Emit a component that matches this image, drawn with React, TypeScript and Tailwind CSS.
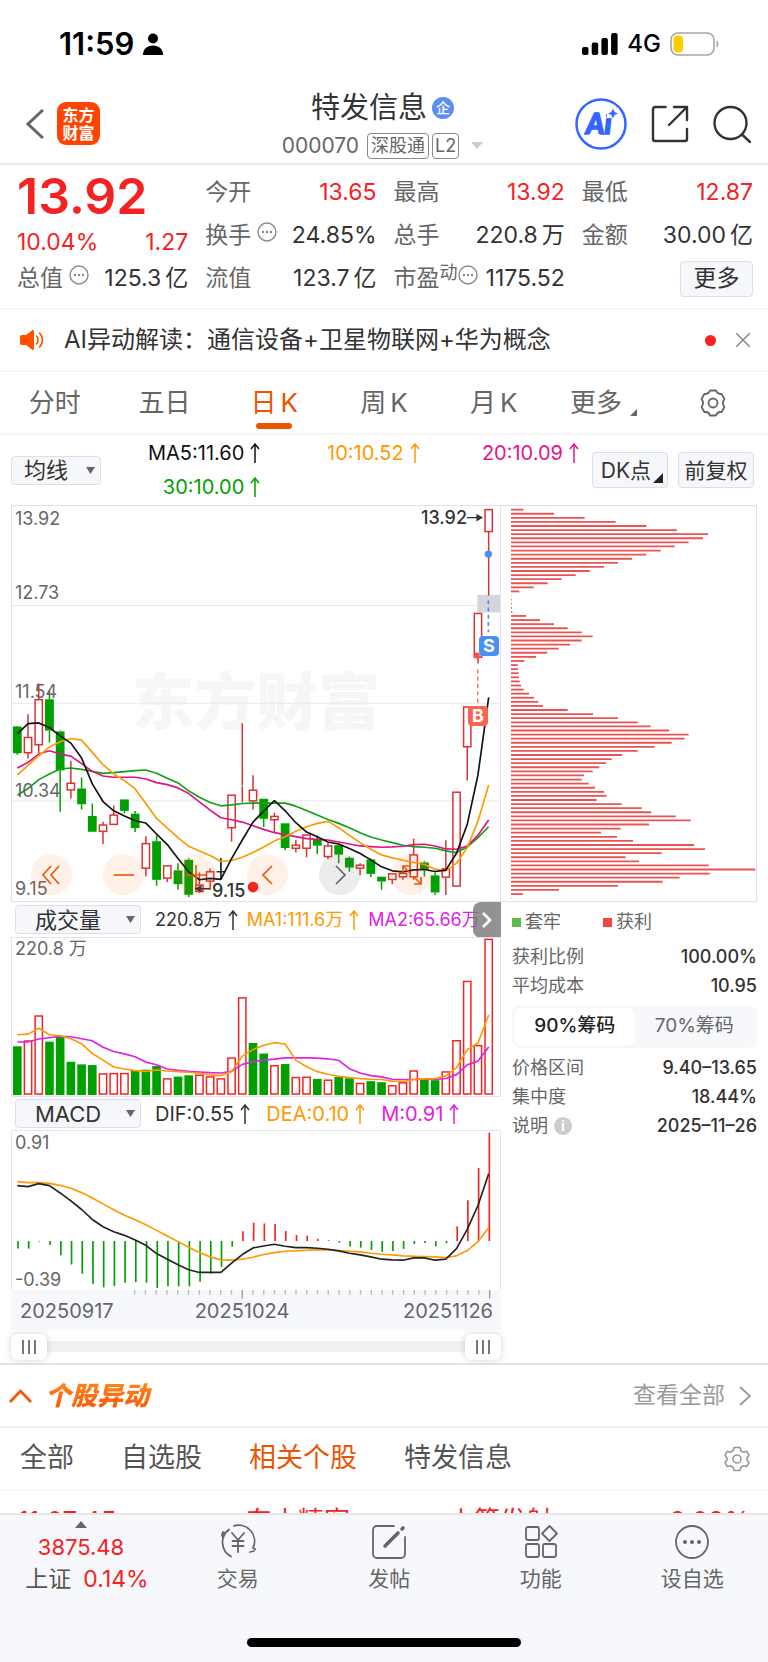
import React, { useState } from 'react';
import clsx from 'clsx';

// Plot units: 3 per CSS pixel. One trading day is STEP units wide.
const STEP = 32.27;
const FIRST = 49;
const dayX = (i: number) => FIRST + i * STEP;

type Kind = 'up' | 'down' | 'flat';
// kind, high, body top, body bottom, low
type Candle = [Kind, number, number, number, number];

const candles: Candle[] = [
  ['down', 678, 680, 760, 765], ['up', 643, 712, 760, 776], ['up', 550, 598, 736, 760],
  ['down', 572, 598, 692, 728], ['down', 692, 695, 812, 937], ['up', 783, 850, 872, 897],
  ['down', 834, 867, 914, 930], ['down', 912, 950, 997, 997], ['up', 967, 976, 997, 1034],
  ['up', 918, 946, 976, 976], ['down', 900, 900, 934, 942], ['down', 935, 943, 986, 998],
  ['up', 1011, 1032, 1108, 1132], ['down', 1008, 1026, 1142, 1160], ['up', 1099, 1099, 1138, 1149],
  ['down', 1092, 1114, 1155, 1172], ['down', 1077, 1082, 1187, 1194], ['up', 1120, 1157, 1178, 1182],
  ['up', 1108, 1117, 1147, 1172], ['flat', 1077, 1118, 1118, 1140], ['up', 886, 886, 986, 1027],
  ['up', 670, 858, 860, 908], ['up', 827, 871, 905, 930], ['down', 898, 898, 958, 983],
  ['up', 940, 950, 962, 1000], ['down', 972, 972, 1046, 1053], ['up', 1022, 1037, 1048, 1060],
  ['up', 1006, 1006, 1048, 1074], ['down', 1008, 1020, 1039, 1064], ['up', 1030, 1039, 1073, 1080],
  ['down', 1034, 1038, 1066, 1092], ['down', 1072, 1076, 1105, 1118], ['up', 1092, 1097, 1108, 1128],
  ['down', 1078, 1081, 1124, 1134], ['down', 1133, 1133, 1147, 1172], ['up', 1123, 1123, 1142, 1155],
  ['up', 1118, 1122, 1134, 1142], ['up', 1018, 1066, 1134, 1142], ['down', 1086, 1090, 1112, 1132],
  ['down', 1120, 1129, 1180, 1188], ['up', 1023, 1108, 1135, 1188], ['up', 877, 877, 1162, 1162],
  ['up', 620, 620, 742, 843], ['up', 338, 338, 472, 490], ['up', 25, 25, 93, 285],
];

const ma5 = [702, 671, 669, 683, 708, 730, 775, 853, 906, 934, 950, 964, 971, 1004, 1036, 1078, 1118, 1142, 1138, 1141, 1078, 1022, 968, 935, 903, 934, 970, 998, 1012, 1028, 1034, 1048, 1063, 1082, 1103, 1115, 1118, 1112, 1111, 1117, 1113, 1062, 975, 826, 592];
const ma10 = [826, 797, 768, 742, 726, 716, 721, 758, 795, 823, 843, 868, 912, 957, 986, 1015, 1041, 1055, 1069, 1087, 1084, 1074, 1060, 1043, 1025, 1012, 996, 982, 972, 966, 985, 1008, 1030, 1050, 1067, 1076, 1083, 1090, 1096, 1110, 1115, 1092, 1045, 965, 856];
const ma20 = [805, 788, 763, 753, 763, 769, 792, 815, 829, 833, 833, 833, 838, 849, 855, 865, 882, 907, 932, 955, 961, 968, 979, 990, 1000, 1006, 1012, 1018, 1020, 1022, 1028, 1034, 1040, 1042, 1044, 1043, 1041, 1036, 1035, 1040, 1049, 1050, 1040, 1008, 962];
const ma30 = [887, 867, 840, 823, 808, 805, 809, 815, 821, 819, 816, 813, 811, 821, 836, 850, 874, 893, 909, 919, 916, 912, 911, 911, 911, 911, 920, 933, 947, 960, 972, 985, 1000, 1013, 1022, 1030, 1038, 1042, 1044, 1047, 1055, 1060, 1043, 1015, 982];

const volumes = [440, 423, 347, 426, 411, 487, 495, 497, 523, 522, 522, 514, 511, 500, 538, 532, 528, 527, 532, 538, 475, 292, 430, 462, 498, 494, 534, 533, 539, 542, 533, 537, 552, 546, 549, 559, 550, 514, 540, 543, 517, 422, 242, 437, 114];
const fallingDays = [0, 3, 4, 5, 6, 7, 11, 12, 13, 15, 16, 22, 23, 25, 28, 30, 31, 33, 34, 38, 39];
const volMa1 = [405, 403, 385, 405, 408, 417, 432, 462, 482, 503, 509, 514, 516, 512, 515, 517, 519, 522, 527, 529, 517, 470, 450, 437, 429, 433, 482, 502, 517, 525, 531, 535, 538, 540, 541, 546, 547, 541, 539, 538, 530, 505, 450, 430, 345];
const volMa2 = [427, 427, 418, 414, 410, 411, 417, 423, 443, 456, 463, 472, 488, 496, 509, 513, 516, 518, 520, 521, 516, 495, 487, 482, 479, 475, 475, 475, 476, 478, 483, 508, 521, 529, 533, 540, 541, 541, 540, 541, 538, 526, 496, 485, 442];

const macdBars = [418, 418, 397, 407, 438, 466, 494, 525, 535, 531, 521, 519, 521, 537, 532, 532, 532, 518, 494, 473, 412, 366, 340, 342, 344, 365, 377, 379, 388, 393, 400, 411, 415, 422, 428, 425, 419, 404, 401, 411, 402, 351, 272, 175, 68];
const dif = [228, 231, 222, 228, 250, 274, 300, 330, 352, 367, 378, 392, 408, 433, 450, 467, 482, 490, 490, 490, 462, 436, 416, 410, 405, 411, 415, 415, 417, 420, 425, 432, 437, 443, 450, 452, 453, 446, 446, 453, 450, 418, 360, 288, 192];
const dea = [216, 219, 219, 221, 227, 236, 249, 265, 283, 301, 317, 331, 346, 363, 380, 397, 414, 430, 443, 452, 453, 450, 444, 436, 430, 426, 425, 423, 422, 422, 424, 426, 428, 432, 435, 437, 440, 441, 442, 443, 445, 440, 424, 397, 355];

const chips = [73, 165, 257, 350, 442, 534, 627, 612, 569, 527, 485, 442, 399, 357, 315, 272, 230, 188, 146, 104, 61, 37, 38, 38, 39, 40, 81, 123, 165, 206, 248, 281, 248, 213, 179, 144, 111, 76, 56, 57, 59, 60, 62, 66, 74, 90, 105, 118, 132, 206, 282, 357, 416, 455, 510, 569, 557, 518, 467, 416, 369, 338, 321, 301, 281, 255, 248, 269, 288, 315, 323, 293, 368, 428, 457, 530, 575, 450, 365, 306, 354, 402, 585, 618, 488, 380, 420, 629, 769, 632, 542, 491, 357, 180, 72, 37];

const toPoints = (values: number[]) => values.map((y, i) => `${dayX(i)},${y}`).join(' ');

const Line = ({ values, color }: { values: number[]; color: string }) => (
  <polyline points={toPoints(values)} fill="none" stroke={color} strokeWidth="5" strokeLinejoin="round" />
);

const UpArrow = () => (
  <svg viewBox="0 0 10 20" className="ml-[6px] inline-block h-5 w-[10px]" fill="none" stroke="currentColor" strokeWidth="1.5">
    <path d="M5 20V1M1 6l4-5 4 5" />
  </svg>
);

const Dots = ({ className }: { className?: string }) => (
  <svg viewBox="0 0 20 20" className={clsx('size-5 text-[#8a8a8a]', className)}>
    <circle cx="10" cy="10" r="9" fill="none" stroke="currentColor" strokeWidth="1.4" />
    <circle cx="6" cy="10" r="1.2" fill="currentColor" />
    <circle cx="10" cy="10" r="1.2" fill="currentColor" />
    <circle cx="14" cy="10" r="1.2" fill="currentColor" />
  </svg>
);

const StatusBar = () => (
  <div className="flex h-[88px] items-center justify-between pr-[49px] pl-[59px]">
    <div className="flex items-center gap-[9px] text-[31px] leading-9 font-semibold text-black">
      11:59
      <svg viewBox="0 0 20 22" className="h-[22px] w-5" fill="currentColor">
        <circle cx="10" cy="5.500" r="5" />
        <path d="M0 22c0-6 4-9.500 10-9.500S20 16 20 22z" />
      </svg>
    </div>
    <div className="flex items-center gap-[9px] text-2xl font-medium text-black">
      <svg viewBox="0 0 36 22" className="h-[22px] w-9" fill="currentColor">
        <rect x="0" y="14" width="6.500" height="8" rx="2" />
        <rect x="9.700" y="9.500" width="6.500" height="12.500" rx="2" />
        <rect x="19.400" y="5" width="6.500" height="17" rx="2" />
        <rect x="29.100" y="0" width="6.500" height="22" rx="2" />
      </svg>
      4G
      <svg viewBox="0 0 49 24" className="h-6 w-[49px]">
        <rect x="1" y="1" width="43" height="22" rx="7" fill="none" stroke="#a5a5a5" strokeWidth="1.600" />
        <rect x="3.500" y="3.500" width="9.500" height="17" rx="4" fill="#ffcc00" />
        <path d="M46.500 8.500c2.600 1 2.600 6 0 7z" fill="#a5a5a5" />
      </svg>
    </div>
  </div>
);

const Header = () => (
  <header className="flex h-[77px] items-center justify-between border-b-2 border-[#e9e9e9] pr-[17px] pl-[26px]">
    <div className="mb-1 flex w-[164px] items-center gap-[13px]">
      <button aria-label="返回">
        <svg viewBox="0 0 18 30" className="h-[30px] w-[18px]" fill="none" stroke="#666" strokeWidth="3">
          <path d="M17 1L2 15l15 14" />
        </svg>
      </button>
      <div className="flex size-[43px] flex-col items-center justify-center rounded-[9px] bg-[#ff4400] text-base leading-[18px] font-bold text-white">
        <span>东方</span>
        <span>财富</span>
      </div>
    </div>
    <div className="flex flex-col items-center">
      <div className="flex items-center gap-[5px] text-[29px] leading-10 text-[#333]">
        特发信息
        <span className="flex size-[22px] items-center justify-center rounded-full bg-[#5c8df0] text-sm leading-none font-medium text-white">企</span>
      </div>
      <div className="flex items-center text-[21px] leading-9 text-[#666]">
        000070
        <span className="ml-2 rounded border border-[#888] px-[3px] text-lg leading-6">深股通</span>
        <span className="ml-[3px] rounded border border-[#888] px-[2px] text-lg leading-6">L2</span>
        <svg viewBox="0 0 12 7" className="ml-3 h-[7px] w-3" fill="#ccc"><path d="M0 0h12L6 7z" /></svg>
      </div>
    </div>
    <div className="mb-1 flex items-center gap-6">
      <button aria-label="AI" className="size-[52px]">
        <svg viewBox="0 0 52 52" className="size-full">
          <circle cx="26" cy="26" r="24.500" fill="none" stroke="#3366ff" strokeWidth="2.500" />
          <text x="11" y="36" fontSize="28" fontWeight="900" fontStyle="italic" fill="#3366ff" stroke="#3366ff" strokeWidth="1.600" className="font-['Lato',sans-serif]">Ai</text>
          <rect x="32" y="10" width="12" height="10" fill="#fff" />
          <path d="M38 10.500l1.600 3.400 3.400 1.600-3.400 1.600L38 20.500l-1.600-3.400-3.400-1.600 3.400-1.600z" fill="#3366ff" />
        </svg>
      </button>
      <button aria-label="分享">
        <svg viewBox="0 0 38 38" className="size-[38px]" fill="none" stroke="#333" strokeWidth="2.400" strokeLinecap="round" strokeLinejoin="round">
          <path d="M14.500 2H4a2 2 0 0 0-2 2v30a2 2 0 0 0 2 2h30a2 2 0 0 0 2-2V24" />
          <path d="M23 2h13v13M36 2L18 20" />
        </svg>
      </button>
      <button aria-label="搜索">
        <svg viewBox="0 0 38 38" className="size-[38px]" fill="none" stroke="#333" strokeWidth="2.400" strokeLinecap="round">
          <circle cx="17.500" cy="18" r="16" />
          <path d="M29 29.500l8 7.500" />
        </svg>
      </button>
    </div>
  </header>
);

interface StatProps {
  label: string;
  value: string;
  unit?: string;
  red?: boolean;
  dots?: boolean;
  sup?: string;
}

const Stat: React.FC<StatProps> = ({ label, value, unit, red, dots, sup }) => (
  <div className="flex h-[43px] items-center justify-between">
    <span className="flex items-center text-[23px] whitespace-nowrap text-[#666]">
      {label}
      {sup && <span className="mb-3 text-lg leading-5">{sup}</span>}
      {dots && <Dots className={clsx('mb-2', !sup && 'ml-[6px]')} />}
    </span>
    <span className={clsx('text-[23px]', red ? 'text-[#f42222]' : 'text-[#333]')}>
      {value}
      {unit && <span className="ml-1">{unit}</span>}
    </span>
  </div>
);

const Quote = () => (
  <section className="grid h-[145px] grid-cols-4 gap-x-[17px] border-b-2 border-[#f5f5f5] pt-[6px] pr-[15px] pl-[17px]">
    <div>
      <div className="flex h-[50px] items-center text-[50px] leading-none font-semibold text-[#f42222]">13.92</div>
      <div className="flex h-9 items-end justify-between text-[23px] leading-[30px] text-[#f42222]">
        <span>10.04%</span>
        <span>1.27</span>
      </div>
      <Stat label="总值" value="125.3" unit="亿" dots />
    </div>
    <div>
      <Stat label="今开" value="13.65" red />
      <Stat label="换手" value="24.85%" dots />
      <Stat label="流值" value="123.7" unit="亿" />
    </div>
    <div>
      <Stat label="最高" value="13.92" red />
      <Stat label="总手" value="220.8" unit="万" />
      <Stat label="市盈" sup="动" dots value="1175.52" />
    </div>
    <div>
      <Stat label="最低" value="12.87" red />
      <Stat label="金额" value="30.00" unit="亿" />
      <div className="flex h-[43px] items-center justify-end">
        <button className="h-9 w-[73px] rounded border border-[#dcdfe8] bg-[#f6f7fa] text-[23px] leading-none text-[#333]">更多</button>
      </div>
    </div>
  </section>
);

const Notice = () => (
  <section className="flex h-[62px] items-center border-b-2 border-[#f5f5f5] pr-[18px] pl-5">
    <svg viewBox="0 0 24 20" className="h-5 w-6" fill="#ff5000">
      <path d="M0 6.500A2 2 0 0 1 2 5h4l6-4.600c1-.7 2-.2 2 1v17.200c0 1.200-1 1.700-2 1L6 15H2a2 2 0 0 1-2-1.500z" />
      <path d="M16.500 6c2 2 2 6 0 8M19.500 3c4 4 4 10 0 14" fill="none" stroke="#ff5000" strokeWidth="1.600" strokeLinecap="round" />
    </svg>
    <p className="ml-5 flex-1 text-2xl whitespace-nowrap text-[#333]">AI异动解读：通信设备+卫星物联网+华为概念</p>
    <span className="size-[11px] rounded-full bg-[#f42222]" />
    <button aria-label="关闭" className="ml-5">
      <svg viewBox="0 0 14 14" className="size-[14px]" stroke="#888" strokeWidth="1.500"><path d="M0 0l14 14M14 0L0 14" /></svg>
    </button>
  </section>
);

const periods = ['分时', '五日', '日K', '周K', '月K', '更多'];

const PeriodTabs = () => {
  const [active, setActive] = useState('日K');
  return (
    <nav className="grid h-[63px] grid-cols-7 border-b-2 border-[#f5f5f5]">
      {periods.map((p) => (
        <button
          key={p}
          onClick={() => setActive(p)}
          className={clsx('relative flex items-center justify-center text-[26px]', active === p ? 'text-[#ea5504]' : 'text-[#666]')}
        >
          {p.replace('K', '')}
          {p.endsWith('K') && <span className="ml-1">K</span>}
          {p === '更多' && (
            <svg viewBox="0 0 7 7" className="mt-5 ml-2 size-[7px]" fill="currentColor"><path d="M7 0v7H0z" /></svg>
          )}
          {active === p && <span className="absolute bottom-1 h-[6px] w-9 rounded-full bg-[#ea5504]" />}
        </button>
      ))}
      <button aria-label="图表设置" className="flex items-center justify-center">
        <svg viewBox="0 0 30 30" className="size-[30px]" fill="none" stroke="#666" strokeWidth="1.800" strokeLinejoin="round">
          <path d="M12 2.500h6c1 3 2.500 4 5.500 3.300l3 5.200c-2 2.500-2 5.500 0 8l-3 5.200c-3-.7-4.500.3-5.500 3.300h-6c-1-3-2.500-4-5.500-3.300l-3-5.200c2-2.500 2-5.500 0-8l3-5.200c3 .7 4.500-.3 5.500-3.300z" />
          <circle cx="15" cy="15" r="4.500" />
        </svg>
      </button>
    </nav>
  );
};

const Picker = ({ label, value, className }: { label: string; value: string; className: string }) => (
  <div className={clsx('relative h-[29px] rounded border border-[#dcdfe8] bg-[#f6f7fa]', className)}>
    <select aria-label={label} defaultValue={value} className="h-full w-full appearance-none pr-5 text-center text-[22px] leading-none text-[#333] outline-none">
      <option>{value}</option>
    </select>
    <svg viewBox="0 0 9 7" className="pointer-events-none absolute top-[10px] right-[5px] h-[7px] w-[9px]" fill="#666"><path d="M0 0h9L4.500 7z" /></svg>
  </div>
);

const IndicatorRow = () => (
  <section className="flex h-[70px] items-center pr-[14px] pl-[11px]">
    <Picker label="主图指标" value="均线" className="w-[90px]" />
    <div className="grid w-[478px] grid-cols-3 text-right text-xl leading-[34px] whitespace-nowrap">
      <span className="flex items-center justify-end text-[#111]">MA5:11.60<UpArrow /></span>
      <span className="flex items-center justify-end text-[#ff9900]">10:10.52<UpArrow /></span>
      <span className="flex items-center justify-end text-[#e6148c]">20:10.09<UpArrow /></span>
      <span className="flex items-center justify-end text-[#00a000]">30:10.00<UpArrow /></span>
    </div>
    <div className="ml-auto flex gap-[10px] text-[21px] text-[#333]">
      <button className="relative h-9 w-[76px] rounded border border-[#dcdfe8] bg-[#f6f7fa] pr-2 leading-none">
        DK点
        <svg viewBox="0 0 10 10" className="absolute right-1 bottom-1 size-[10px]" fill="#222"><path d="M10 0v10H0z" /></svg>
      </button>
      <button className="h-9 w-[76px] rounded border border-[#dcdfe8] bg-[#f6f7fa] leading-none">前复权</button>
    </div>
  </section>
);

const RoundButton = ({ label, gray, children }: { label: string; gray?: boolean; children: React.ReactNode }) => (
  <button aria-label={label} className={clsx('flex size-[41px] items-center justify-center rounded-full', gray ? 'bg-[#66666620] text-[#666]' : 'bg-[#ff660018] text-[#ee5a0a]')}>
    <svg viewBox="0 0 22 22" className="size-[22px]" fill="none" stroke="currentColor" strokeWidth="1.700">{children}</svg>
  </button>
);

const PriceChart = () => (
  <div className="relative h-[397px] border border-[#dfe2ea] text-lg leading-5 text-[#666]">
    <span className="absolute top-[152px] left-[120px] text-[62px] leading-[90px] font-black whitespace-nowrap text-[#f6f6f6]">东方财富</span>
    <svg viewBox="33 15 1470 1191" preserveAspectRatio="none" className="absolute inset-0 size-full">
      <path d="M33 315H1503M33 610H1503M33 904H1503" stroke="#e8e9f0" strokeWidth="3" />
      <rect x="1435" y="283" width="68" height="53" fill="#d3d6dc" />
      {candles.map(([kind, high, top, bottom, low], i) => {
        const x = dayX(i);
        const color = kind === 'down' ? '#00a000' : kind === 'up' ? '#d93333' : '#333';
        return (
          <g key={i} stroke={color} strokeWidth="4.500">
            <path d={`M${x} ${high}V${top}M${x} ${bottom}V${low}`} />
            {kind === 'flat' && <path d={`M${x} ${high}V${low}M${x - 13} ${top}H${x + 13}`} />}
            {kind === 'up' && <rect x={x - 11} y={top + 1} width="22" height={Math.max(bottom - top - 2, 0)} fill="none" />}
            {kind === 'down' && <rect x={x - 11} y={top + 2} width="22" height={bottom - top - 4} fill={color} />}
          </g>
        );
      })}
      <Line values={ma30} color="#12a012" />
      <Line values={ma20} color="#dc1487" />
      <Line values={ma10} color="#ff9900" />
      <Line values={ma5} color="#111" />
      <path d="M1468 299V396" stroke="#4a8ff5" strokeWidth="5" strokeDasharray="12 10" />
      <path d="M1436 508V610" stroke="#fa6450" strokeWidth="4" strokeDasharray="12 10" />
      <circle cx="1468" cy="160" r="11" fill="#4a8ff5" />
      <circle cx="1433" cy="466" r="9" fill="#fa5040" />
      <path d="M1403 50h42M1434 42l14 8-14 8z" stroke="#333" strokeWidth="4" fill="#333" />
      <path d="M630 1169H590M602 1161l-15 8 15 8z" stroke="#333" strokeWidth="4" fill="#333" />
      <circle cx="759" cy="1164" r="16" fill="#f42222" />
    </svg>
    <span className="absolute top-[3px] left-[3px]">13.92</span>
    <span className="absolute top-[77px] left-[3px]">12.73</span>
    <span className="absolute top-[176px] left-[3px]">11.54</span>
    <span className="absolute top-[275px] left-[3px]">10.34</span>
    <span className="absolute bottom-[2px] left-[3px]">9.15</span>
    <span className="absolute top-[2px] right-[33px] font-medium text-[#333]">13.92</span>
    <span className="absolute bottom-0 left-[200px] font-medium text-[#333]">9.15</span>
    <span className="absolute top-[130px] right-[1px] size-5 rounded bg-[#4a8ff5] text-center text-lg leading-5 font-bold text-white">S</span>
    <span className="absolute top-[200px] right-[12px] size-5 rounded bg-[#fa6450] text-center text-lg leading-5 font-bold text-white">B</span>
    <div className="absolute bottom-[6px] left-[19px] flex gap-[31px]">
      <RoundButton label="最早"><path d="M10 2L2 11l8 9M18 2l-8 9 8 9" /></RoundButton>
      <RoundButton label="缩小"><path d="M1 11h20" /></RoundButton>
      <RoundButton label="放大"><path d="M1 11h20M11 1v20" /></RoundButton>
      <RoundButton label="左移"><path d="M15 2l-9 9 9 9" /></RoundButton>
      <RoundButton label="右移" gray><path d="M7 2l9 9-9 9" /></RoundButton>
      <RoundButton label="全屏"><path d="M2 9V2h7M2 2l8 8M20 13v7h-7M20 20l-8-8" /></RoundButton>
    </div>
  </div>
);

const VolumeChart = () => (
  <>
    <div className="relative flex h-[35px] items-center pl-1 text-lg whitespace-nowrap">
      <Picker label="副图一" value="成交量" className="w-[126px]" />
      <span className="ml-[14px] flex items-center text-[#333]">220.8万<UpArrow /></span>
      <span className="ml-[9px] flex items-center text-[#ff9900]">MA1:111.6万<UpArrow /></span>
      <span className="ml-[9px] flex items-center text-[#dd22e6]">MA2:65.66万</span>
      <button aria-label="更多指标" className="absolute top-0 right-0 flex h-9 w-7 items-center justify-center rounded-l-lg bg-[#777777cc]">
        <svg viewBox="0 0 10 16" className="h-4 w-[10px]" fill="none" stroke="#fff" strokeWidth="2.600"><path d="M1 1l7 7-7 7" /></svg>
      </button>
    </div>
    <div className="relative h-[160px] border border-[#e3e5ea]">
      <svg viewBox="33 111 1470 480" preserveAspectRatio="none" className="size-full">
        {volumes.map((top, i) =>
          fallingDays.includes(i) ? (
            <rect key={i} x={dayX(i) - 13} y={top} width="26" height={588 - top} fill="#00a000" />
          ) : (
            <rect key={i} x={dayX(i) - 11} y={top + 1} width="22" height={584 - top} fill="none" stroke="#f42222" strokeWidth="4.500" />
          ),
        )}
        <Line values={volMa2} color="#dd22e6" />
        <Line values={volMa1} color="#ff9900" />
      </svg>
      <span className="absolute top-px left-[3px] text-lg leading-5 text-[#666]">220.8 万</span>
    </div>
  </>
);

const MacdChart = () => (
  <>
    <div className="flex h-[33px] items-center pl-1 text-xl whitespace-nowrap">
      <Picker label="副图二" value="MACD" className="w-[126px]" />
      <span className="ml-[14px] flex items-center text-[#333]">DIF:0.55<UpArrow /></span>
      <span className="ml-4 flex items-center text-[#ff9900]">DEA:0.10<UpArrow /></span>
      <span className="ml-4 flex items-center text-[#dd22e6]">M:0.91<UpArrow /></span>
    </div>
    <div className="relative h-[160px] border border-b-0 border-[#e3e5ea] text-lg leading-5 text-[#666]">
      <svg viewBox="33 63 1470 480" preserveAspectRatio="none" className="size-full">
        {macdBars.map((y, i) => (
          <path key={i} d={`M${dayX(i) + 2} 395V${y}`} stroke={y > 395 ? '#00a000' : '#f42222'} strokeWidth="5" />
        ))}
        <Line values={dea} color="#ff9900" />
        <Line values={dif} color="#222" />
      </svg>
      <span className="absolute top-[2px] left-[3px]">0.91</span>
      <span className="absolute bottom-0 left-[3px]">-0.39</span>
    </div>
    <div className="h-10 bg-[#f7f8fb]">
      <svg viewBox="33 0 1470 27" preserveAspectRatio="none" className="h-[9px] w-full" stroke="#bbb" strokeWidth="4">
        {Array.from({ length: 34 }, (_, k) => k + 11).map((i) => (
          <path key={i} d={`M${dayX(i)} 0V${i === 21 || i === 44 ? 26 : 14}`} stroke={i === 21 || i === 44 ? '#999' : '#bbb'} />
        ))}
      </svg>
      <div className="grid grid-cols-[172fr_100fr_201fr] pr-2 pl-[9px] text-xl leading-6 text-[#666]">
        <span>20250917</span>
        <span className="text-center">20251024</span>
        <span className="text-right">20251126</span>
      </div>
    </div>
    <RangeBar />
  </>
);

const thumb =
  'pointer-events-none absolute inset-0 h-full w-full appearance-none bg-transparent [&::-webkit-slider-thumb]:pointer-events-auto [&::-webkit-slider-thumb]:h-[26px] [&::-webkit-slider-thumb]:w-9 [&::-webkit-slider-thumb]:appearance-none [&::-webkit-slider-thumb]:rounded-md [&::-webkit-slider-thumb]:bg-white [&::-webkit-slider-thumb]:bg-[image:repeating-linear-gradient(90deg,#777_0px_2px,transparent_2px_6px)] [&::-webkit-slider-thumb]:bg-[length:14px_14px] [&::-webkit-slider-thumb]:bg-center [&::-webkit-slider-thumb]:bg-no-repeat [&::-webkit-slider-thumb]:shadow-[0_0_6px_rgba(0,0,0,0.18)]';

const RangeBar = () => (
  <div className="relative flex h-[33px] items-center">
    <div className="h-[11px] w-full bg-[#f0f0f4]" />
    <input type="range" aria-label="起始日期" defaultValue={0} className={thumb} />
    <input type="range" aria-label="结束日期" defaultValue={100} className={thumb} />
  </div>
);

const InfoLine = ({ label, value, info }: { label: string; value: string; info?: boolean }) => (
  <div className="flex h-[29px] items-center justify-between text-lg">
    <span className="flex items-center gap-[6px] text-[#666]">
      {label}
      {info && <span className="flex size-[18px] items-center justify-center rounded-full bg-[#ccc] text-sm font-bold text-white">i</span>}
    </span>
    <span className="font-medium text-[#333]">{value}</span>
  </div>
);

const ChipPanel = () => {
  const [range, setRange] = useState('90%筹码');
  return (
    <aside>
      <div className="h-[397px] border border-l-0 border-[#dfe2ea]">
        <svg viewBox="6 15 765 1191" preserveAspectRatio="none" className="size-full">
          {chips.map((end, i) => (
            <path key={i} d={`M36 ${26 + i * 12.33}H${end}`} stroke="#eb5252" strokeWidth="5.500" />
          ))}
        </svg>
      </div>
      <div className="pl-[11px]">
        <div className="flex h-10 items-center text-lg text-[#666]">
          <span className="mr-1 size-[9px] bg-[#5abe46]" />
          套牢
          <span className="mr-1 ml-[42px] size-[9px] bg-[#f04646]" />
          获利
        </div>
        <InfoLine label="获利比例" value="100.00%" />
        <InfoLine label="平均成本" value="10.95" />
        <div className="my-[5px] flex h-[43px] rounded-lg bg-[#f7f8fb] p-[3px] text-[19px]">
          {['90%筹码', '70%筹码'].map((r) => (
            <button
              key={r}
              onClick={() => setRange(r)}
              className={clsx('flex-1 rounded-md', range === r ? 'bg-white font-medium text-[#222]' : 'text-[#666]')}
            >
              {r}
            </button>
          ))}
        </div>
        <InfoLine label="价格区间" value="9.40–13.65" />
        <InfoLine label="集中度" value="18.44%" />
        <InfoLine label="说明" value="2025–11–26" info />
      </div>
    </aside>
  );
};

const filters = ['全部', '自选股', '相关个股', '特发信息'];

const Movements = () => {
  const [filter, setFilter] = useState('相关个股');
  return (
    <section className="border-t-2 border-[#e4e5ea]">
      <div className="flex h-[63px] items-center border-b-2 border-[#eeeeee] pr-[17px] pl-[9px]">
        <svg viewBox="0 0 23 14" className="h-[14px] w-[23px]" fill="none" stroke="#f55a0a" strokeWidth="2.800"><path d="M1 13L11.500 2 22 13" /></svg>
        <h2 className="ml-[13px] bg-gradient-to-b from-[#ff8c1a] to-[#ff4800] bg-clip-text pr-1 text-[26px] leading-9 font-black text-transparent italic">个股异动</h2>
        <a href="#all" className="ml-auto flex items-center gap-[14px] text-[23px] text-[#999]">
          查看全部
          <svg viewBox="0 0 12 20" className="h-5 w-3" fill="none" stroke="currentColor" strokeWidth="1.800"><path d="M1 1l10 9-10 9" /></svg>
        </a>
      </div>
      <div className="flex h-[63px] items-center gap-[47px] border-b-2 border-[#f7f7f7] pr-[18px] pl-5 text-[27px]">
        {filters.map((f) => (
          <button key={f} onClick={() => setFilter(f)} className={filter === f ? 'text-[#ea5504]' : 'text-[#555]'}>{f}</button>
        ))}
        <button aria-label="异动设置" className="ml-auto">
          <svg viewBox="0 0 26 26" className="size-[26px]" fill="none" stroke="#999" strokeWidth="1.600" strokeLinejoin="round">
            <path d="M10 1.500h6l.9 3.200 2.600 1.500 3.200-.9 2.300 4.200-2 2.500v2l2 2.500-2.300 4.200-3.200-.9-2.600 1.500-.9 3.200h-6l-.9-3.200-2.600-1.500-3.200.9L1 16.500 3 14v-2L1 9.500l2.300-4.200 3.200.9 2.600-1.500z" />
            <circle cx="13" cy="13" r="4" />
          </svg>
        </button>
      </div>
      <div className="grid h-[22px] grid-cols-[228fr_202fr_200fr_102fr] overflow-hidden px-[18px] pt-3 text-[26px] leading-9 whitespace-nowrap text-[#f42222]">
        <span>11:07:45</span>
        <span>东山精密</span>
        <span>火箭发射</span>
        <span className="text-right">9.09%</span>
      </div>
    </section>
  );
};

const ToolButton = ({ label, children }: { label: string; children: React.ReactNode }) => (
  <button className="flex flex-col items-center gap-[3px] pt-[9px] text-[21px] leading-8 text-[#666]">
    <svg viewBox="0 0 36 36" className="size-9" fill="none" stroke="currentColor" strokeWidth="1.800" strokeLinecap="round" strokeLinejoin="round">{children}</svg>
    {label}
  </button>
);

const BottomBar = () => (
  <footer className="h-[149px] border-t-2 border-[#e4e6ea] bg-[#f7f8fb]">
    <div className="grid h-[123px] grid-cols-[162px_1fr_1fr_1fr_1fr]">
      <div className="flex flex-col items-center pt-[6px] text-[22px] leading-8 text-[#f42222]">
        <svg viewBox="0 0 12 7" className="mb-[3px] h-[7px] w-3" fill="#666"><path d="M6 0l6 7H0z" /></svg>
        <span>3875.48</span>
        <span className="flex gap-3 pl-3 text-[23px]"><span className="text-[#555]">上证</span>0.14%</span>
      </div>
      <ToolButton label="交易">
        <path d="M9 5.500A16 16 0 0 0 11 32.500M3 8l-1 4M8 7l-6 3M14 1.800A16 16 0 0 1 33 24M34 27l-4 1M33 24l4 2" />
        <path d="M12 9l6 7 6-7M18 16v12M12.500 17h11M12.500 22h11" />
      </ToolButton>
      <ToolButton label="发帖">
        <path d="M23 2H6a4 4 0 0 0-4 4v24a4 4 0 0 0 4 4h24a4 4 0 0 0 4-4V13" />
        <path d="M14 22L27 9" strokeWidth="3.600" />
        <path d="M31 5l1-1" strokeWidth="3.600" />
      </ToolButton>
      <ToolButton label="功能">
        <rect x="3" y="3" width="13" height="13" rx="2" />
        <path d="M26.500 2l7.500 7.500-7.500 7.500L19 9.500z" />
        <rect x="3" y="20" width="13" height="13" rx="2" />
        <rect x="20" y="20" width="13" height="13" rx="2" />
      </ToolButton>
      <ToolButton label="设自选">
        <circle cx="18" cy="18" r="16" />
        <path d="M11 18h.01M18 18h.01M25 18h.01" strokeWidth="4" />
      </ToolButton>
    </div>
    <div className="mx-auto h-[9px] w-[274px] rounded-full bg-black" />
  </footer>
);

export default function App() {
  return (
    <main className="w-full overflow-hidden bg-white font-['Inter','Noto_Sans_CJK_SC',sans-serif]">
      <StatusBar />
      <Header />
      <Quote />
      <Notice />
      <PeriodTabs />
      <IndicatorRow />
      <div className="grid grid-cols-[490fr_256fr] pr-[11px] pl-[11px]">
        <div>
          <PriceChart />
          <VolumeChart />
          <MacdChart />
        </div>
        <ChipPanel />
      </div>
      <Movements />
      <BottomBar />
    </main>
  );
}
